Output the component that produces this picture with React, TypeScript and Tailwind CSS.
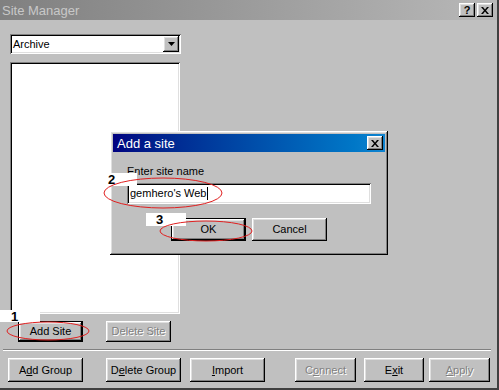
import React from "react";

const raised =
  "shadow-[inset_-1px_-1px_#000,inset_1px_1px_#fff,inset_-2px_-2px_#808080,inset_2px_2px_#dfdfdf]";
const sunken =
  "shadow-[inset_1px_1px_#808080,inset_-1px_-1px_#fff,inset_2px_2px_#000,inset_-2px_-2px_#dfdfdf]";

function Btn({
  children,
  w,
  h,
  def,
  disabled,
}: {
  children: React.ReactNode;
  w: string;
  h: string;
  def?: boolean;
  disabled?: boolean;
}) {
  return (
    <div
      className={`${w} ${h} shrink-0 bg-[#c0c0c0] flex items-center justify-center text-[11px] ${
        def ? "border border-black" : ""
      } ${disabled ? "text-[#808080] [text-shadow:1px_1px_#fff]" : "text-black"}`}
    >
      <div className={`w-full h-full flex items-center justify-center ${raised}`}>{children}</div>
    </div>
  );
}

function Tag({ n, cls }: { n: string; cls: string }) {
  return (
    <div className={`absolute bg-white text-black text-[13px] font-bold leading-[13px] ${cls}`}>{n}</div>
  );
}

export default function App() {
  return (
    <div
      className="relative w-[499px] h-[390px] bg-[#c0c0c0] overflow-hidden border-r-2 border-b-2 border-r-[#404040] border-b-[#404040]"
      style={{ fontFamily: '"Liberation Sans", Arial, sans-serif' }}
    >
      {/* main title bar */}
      <div className="h-[20px] bg-gradient-to-r from-[#808080] to-[#b8b8b8] flex items-center pl-[2px] pr-[4px]">
        <span className="text-[13px] text-[#c8c8c8] leading-none">Site Manager</span>
        <div className="ml-auto flex gap-[2px]">
          <div className={`w-[16px] h-[14px] bg-[#c0c0c0] ${raised} flex items-center justify-center text-[11px] font-bold leading-none`}>?</div>
          <div className={`w-[16px] h-[14px] bg-[#c0c0c0] ${raised} flex items-center justify-center`}>
            <svg width="8" height="7" viewBox="0 0 8 7">
              <path d="M0 0h2l2 2.5L6 0h2L5 3.5 8 7H6L4 4.5 2 7H0l3-3.5z" fill="#000" />
            </svg>
          </div>
        </div>
      </div>

      {/* body */}
      <div className="flex flex-col">
        <div className="pl-[10px] pt-[14px]">
          <div className={`w-[171px] h-[20px] bg-white ${sunken} flex items-center pl-[3px] pr-[2px]`}>
            <span className="text-[11px] text-black">Archive</span>
            <div className={`ml-auto w-[16px] h-[16px] bg-[#c0c0c0] ${raised} flex items-center justify-center`}>
              <svg width="7" height="4" viewBox="0 0 7 4">
                <path d="M0 0h7L3.5 4z" fill="#000" />
              </svg>
            </div>
          </div>
          <div className={`mt-[8px] w-[170px] h-[252px] bg-white ${sunken}`} />
          <div className="flex mt-[7px] pl-[8px] gap-[23px]">
            <Btn w="w-[65px]" h="h-[21px]" def>
              Add Site
            </Btn>
            <Btn w="w-[65px]" h="h-[21px]" disabled>
              Delete Site
            </Btn>
          </div>
        </div>
        <div className="mt-[7px] mx-[3px] w-[488px] h-[2px] border-t border-t-[#808080] border-b border-b-white" />
        <div className="flex mt-[7px] pl-[8px]">
          <Btn w="w-[75px]" h="h-[24px]">
            <span>
              A<u>d</u>d Group
            </span>
          </Btn>
          <div className="ml-[23px]">
            <Btn w="w-[75px]" h="h-[24px]">
              <span>
                D<u>e</u>lete Group
              </span>
            </Btn>
          </div>
          <div className="ml-[9px]">
            <Btn w="w-[75px]" h="h-[24px]">
              <span>
                <u>I</u>mport
              </span>
            </Btn>
          </div>
          <div className="ml-[30px]">
            <Btn w="w-[61px]" h="h-[24px]" disabled>
              <span>
                C<u>o</u>nnect
              </span>
            </Btn>
          </div>
          <div className="ml-[8px]">
            <Btn w="w-[60px]" h="h-[24px]">
              <span>
                E<u>x</u>it
              </span>
            </Btn>
          </div>
          <div className="ml-[5px]">
            <Btn w="w-[61px]" h="h-[24px]" disabled>
              <span>
                <u>A</u>pply
              </span>
            </Btn>
          </div>
        </div>
      </div>

      {/* Add a site dialog */}
      <div className={`absolute left-[110px] top-[131px] w-[278px] h-[124px] bg-[#c0c0c0] p-[3px] ${raised}`}>
        <div className="h-[18px] bg-gradient-to-r from-[#000080] to-[#1084d0] flex items-center pl-[4px] pr-[2px]">
          <span className="text-[13px] text-white leading-none">Add a site</span>
          <div className={`ml-auto w-[16px] h-[14px] bg-[#c0c0c0] ${raised} flex items-center justify-center`}>
            <svg width="8" height="7" viewBox="0 0 8 7">
              <path d="M0 0h2l2 2.5L6 0h2L5 3.5 8 7H6L4 4.5 2 7H0l3-3.5z" fill="#000" />
            </svg>
          </div>
        </div>
        <div className="pl-[14px] pt-[13px]">
          <div className="text-[11px] leading-[13px] text-black">Enter site name</div>
          <div className={`mt-[5px] w-[244px] h-[21px] bg-white ${sunken} flex items-center pl-[3px]`}>
            <span className="text-[11px] text-black">gemhero's Web</span>
            <span className="w-px h-[13px] bg-black" />
          </div>
          <div className="flex mt-[14px] pl-[44px] gap-[6px]">
            <Btn w="w-[75px]" h="h-[23px]" def>
              OK
            </Btn>
            <Btn w="w-[75px]" h="h-[23px]">
              Cancel
            </Btn>
          </div>
        </div>
      </div>

      {/* annotations */}
      <Tag n="1" cls="left-0 top-[310px] w-[40px] h-[12px] pl-[11px]" />
      <Tag n="2" cls="left-[106px] top-[173px] w-[31px] h-[13px] pl-[2px]" />
      <Tag n="3" cls="left-[146px] top-[213px] w-[40px] h-[13px] pl-[10px]" />
      <svg className="absolute left-0 top-0 pointer-events-none" width="499" height="390">
        <ellipse cx="48" cy="331" rx="41" ry="9" fill="none" stroke="#e02020" strokeWidth="1" />
        <ellipse cx="163" cy="193" rx="59" ry="15" fill="none" stroke="#e02020" strokeWidth="1" />
        <ellipse cx="206" cy="231" rx="46" ry="10" fill="none" stroke="#e02020" strokeWidth="1" />
      </svg>
    </div>
  );
}
